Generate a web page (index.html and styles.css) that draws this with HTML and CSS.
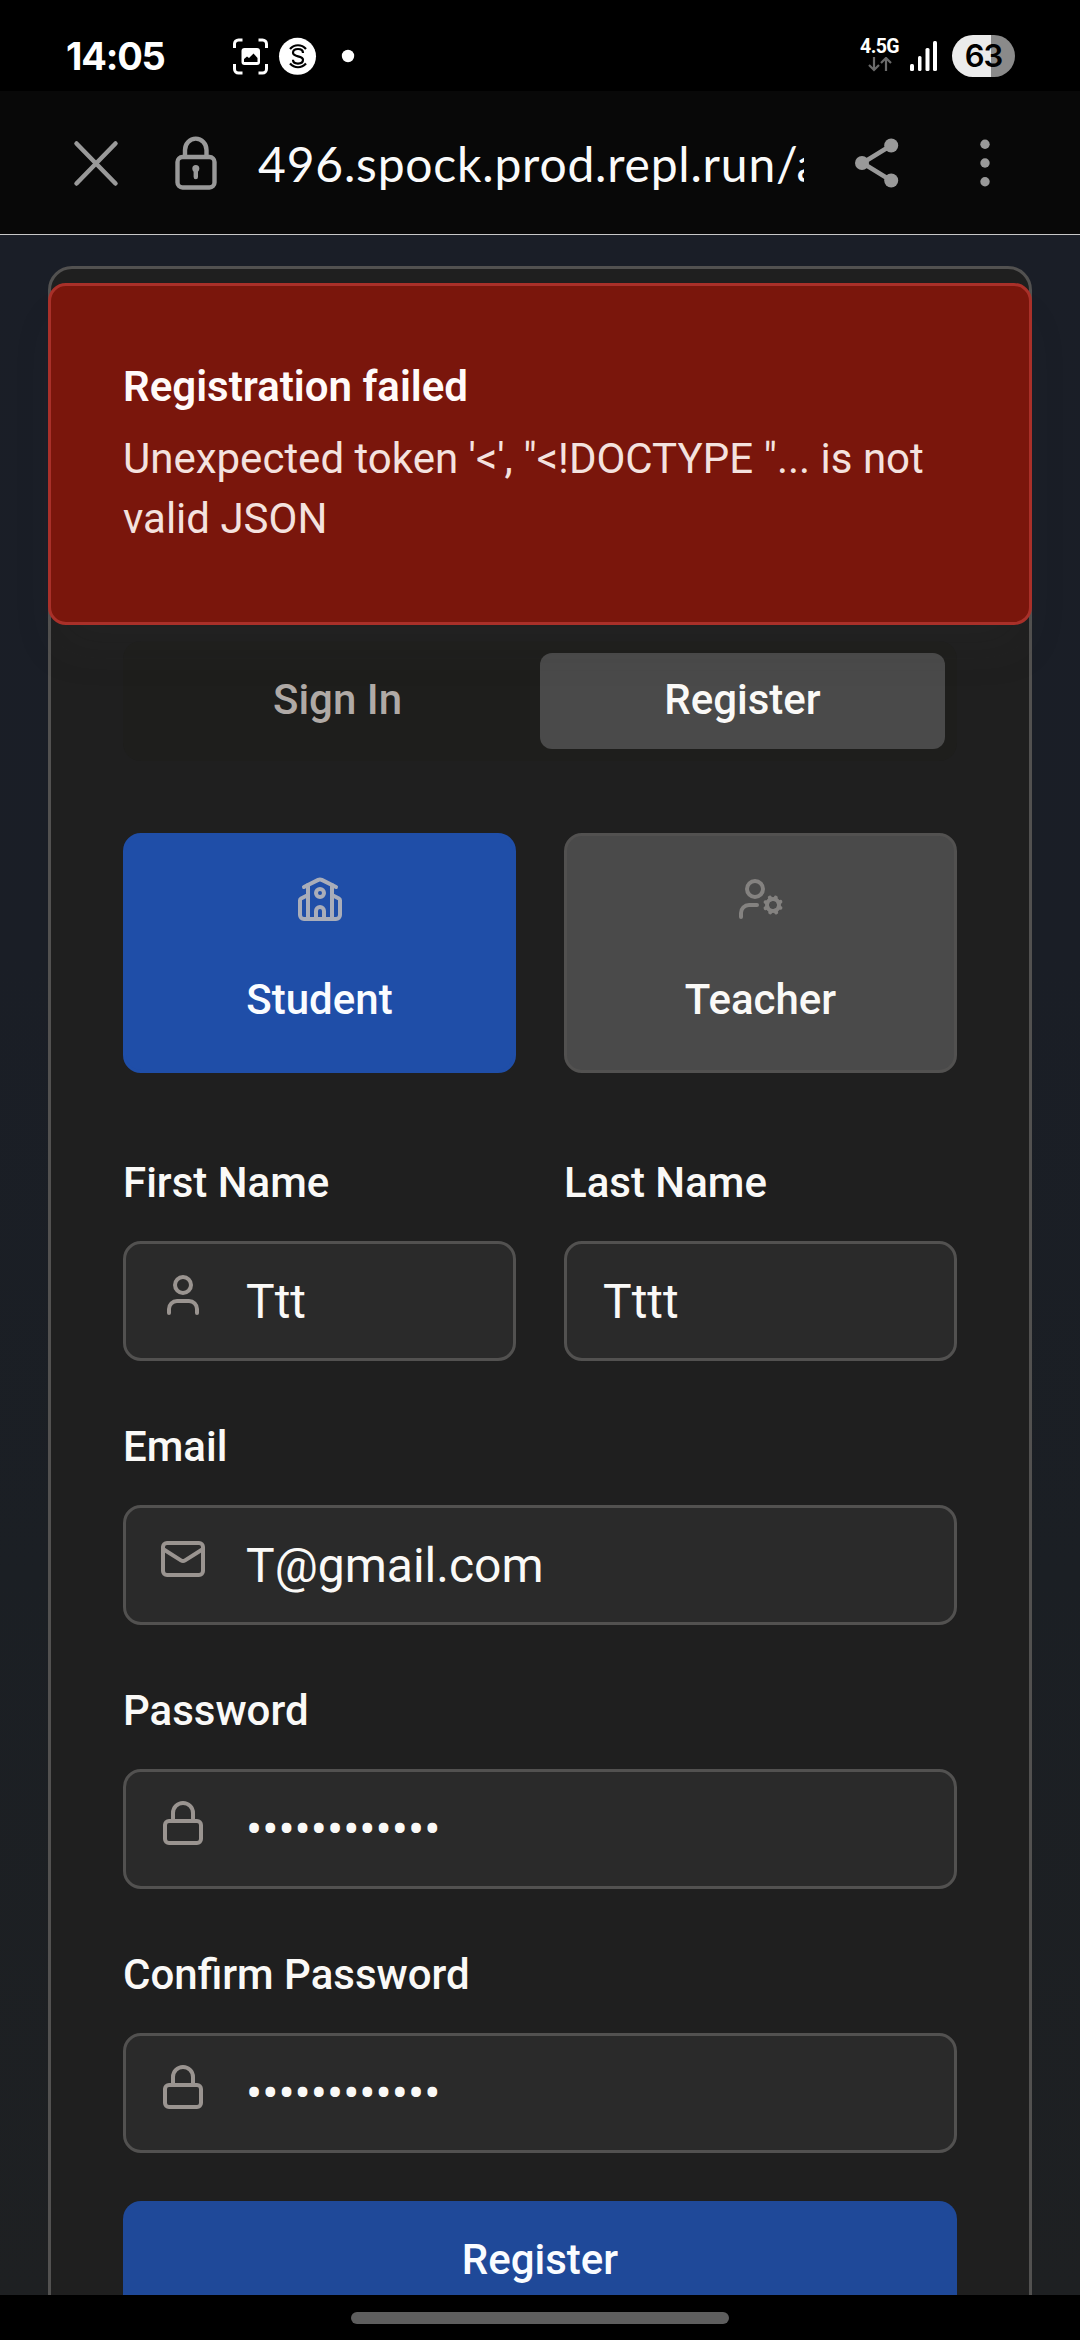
FILE: index.html
```html
<!DOCTYPE html>
<html lang="en">
<head>
<meta charset="utf-8">
<title>Register</title>
<link rel="stylesheet" href="styles.css">
</head>
<body>
<svg class="sprite" width="0" height="0">
  <symbol id="user" viewBox="0 0 24 24"><path d="M19 21v-2a4 4 0 0 0-4-4H9a4 4 0 0 0-4 4v2"/><circle cx="12" cy="7" r="4"/></symbol>
  <symbol id="mail" viewBox="0 0 24 24"><rect x="2" y="4" width="20" height="16" rx="2"/><path d="m22 7-8.97 5.7a1.94 1.94 0 0 1-2.06 0L2 7"/></symbol>
  <symbol id="lock" viewBox="0 0 24 24"><rect x="3" y="11" width="18" height="11" rx="2"/><path d="M7 11V7a5 5 0 0 1 10 0v4"/></symbol>
  <symbol id="school" viewBox="0 0 24 24"><path d="M14 22v-4a2 2 0 1 0-4 0v4"/><path d="m18 10 3.447 1.724a1 1 0 0 1 .553.894V20a2 2 0 0 1-2 2H4a2 2 0 0 1-2-2v-7.382a1 1 0 0 1 .553-.894L6 10"/><path d="M18 5v17"/><path d="m4 6 7.106-3.553a2 2 0 0 1 1.788 0L20 6"/><path d="M6 5v17"/><circle cx="12" cy="9" r="2"/></symbol>
  <symbol id="user-cog" viewBox="0 0 24 24"><circle cx="18" cy="15" r="3"/><circle cx="9" cy="7" r="4"/><path d="M10 15H6a4 4 0 0 0-4 4v2"/><path d="m21.7 16.4-.9-.3M15.2 13.9l-.9-.3M16.6 18.7l.3-.9M19.1 12.2l.3-.9M19.6 18.7l-.4-1M16.8 12.3l-.4-1M14.3 16.6l1-.4M20.7 13.8l1-.4"/></symbol>
</svg>

<header class="status">
  <span class="clock">14:05</span>
  <svg class="notices" width="126" height="40" viewBox="0 0 126 40" fill="none">
    <path d="M2.500 12V8a4 4 0 0 1 4-4h4M26.500 4h4a4 4 0 0 1 4 4v4M34.500 28v5a4 4 0 0 1-4 4h-4M10.500 37h-4a4 4 0 0 1-4-4v-5" stroke="#fff" stroke-width="3"/>
    <rect x="9.500" y="12" width="18.500" height="17" rx="3" fill="#fff"/>
    <path d="M12 26v-3l3-2.500 2 1.500 4.500-4.500 4 4.500v4z" fill="#000"/>
    <circle cx="65.500" cy="20.300" r="18.500" fill="#fff"/>
    <path d="M71 17c0-2.500-2-4-5-4s-5 1.500-5 3.800c0 4.700 10 2.400 10 7 0 2.300-2 3.800-5 3.800s-5-1.500-5-3.800M58 13c4.500-5 11.500-5 16 0M58 27.500c4.500 5 11.500 5 16 0" stroke="#000" stroke-width="2.200"/>
    <circle cx="116" cy="20" r="6.200" fill="#fff"/>
  </svg>
  <div class="network">
    <span>4.5G</span>
    <svg width="26" height="15" viewBox="0 0 26 15" fill="none" stroke="#6b6b6b" stroke-width="2.200"><path d="M7 0v13M2 8l5 5 5-5M19 14V1M14 6l5-5 5 5"/></svg>
  </div>
  <svg class="signal" width="28" height="30" viewBox="0 0 28 30" fill="#fff"><rect x="0" y="23" width="4" height="7" rx="1.500"/><rect x="8" y="15" width="3.500" height="15" rx="1.500"/><rect x="15.500" y="7" width="4" height="23" rx="1.500"/><rect x="23" y="0" width="4" height="30" rx="1.500"/></svg>
  <span class="battery">63</span>
</header>

<nav class="toolbar">
  <svg class="close" width="50" height="54" viewBox="0 0 50 54" fill="none" stroke="#999" stroke-width="4.500" stroke-linecap="round"><path d="M5.500 7.500l39 40M44.500 7.500l-39 40"/></svg>
  <svg class="secure" width="42" height="54" viewBox="0 0 42 54" fill="none" stroke="#999" stroke-width="4.400"><rect x="2.500" y="21" width="37" height="30.500" rx="5"/><path d="M10 21v-7a10.700 11.300 0 0 1 21.500 0v7"/><circle cx="20.800" cy="32.500" r="3.500" fill="#999" stroke="none"/><path d="M20.800 33v8" stroke-linecap="round"/></svg>
  <span class="url">496.spock.prod.repl.run/a</span>
  <svg class="share" width="44" height="52" viewBox="0 0 44 52" fill="#999"><path d="M36 8.500L7.500 26 36 43.500" fill="none" stroke="#999" stroke-width="4.500"/><circle cx="7" cy="26" r="7"/><circle cx="36.200" cy="8.500" r="7"/><circle cx="36.200" cy="43.500" r="7"/></svg>
  <svg class="more" width="10" height="50" viewBox="0 0 10 50" fill="#999"><circle cx="5" cy="6.300" r="4.700"/><circle cx="5" cy="25" r="4.700"/><circle cx="5" cy="43.700" r="4.700"/></svg>
</nav>

<main class="page">
  <section class="card">
    <div class="tabs">
      <span class="tab">Sign In</span>
      <span class="tab active">Register</span>
    </div>
    <div class="pair roles">
      <div class="role selected"><svg class="icon"><use href="#school"/></svg><span>Student</span></div>
      <div class="role"><svg class="icon"><use href="#user-cog"/></svg><span>Teacher</span></div>
    </div>
    <div class="form">
      <div class="pair">
        <div class="field"><span class="label">First Name</span><div class="input"><svg class="icon"><use href="#user"/></svg><span>Ttt</span></div></div>
        <div class="field"><span class="label">Last Name</span><div class="input"><span>Tttt</span></div></div>
      </div>
      <div class="field"><span class="label">Email</span><div class="input"><svg class="icon"><use href="#mail"/></svg><span>T@gmail.com</span></div></div>
      <div class="field"><span class="label">Password</span><div class="input"><svg class="icon"><use href="#lock"/></svg><span>••••••••••••</span></div></div>
      <div class="field"><span class="label">Confirm Password</span><div class="input"><svg class="icon"><use href="#lock"/></svg><span>••••••••••••</span></div></div>
    </div>
    <div class="submit">Register</div>
  </section>
  <div class="toast">
    <strong>Registration failed</strong>
    <p>Unexpected token '&lt;', "&lt;!DOCTYPE "... is not valid JSON</p>
  </div>
</main>

<footer class="gesture"><span></span></footer>
</body>
</html>
```
FILE: styles.css
```css
* { box-sizing: border-box; }

body {
  margin: 0;
  width: 1080px;
  height: 2340px;
  overflow: hidden;
  display: flex;
  flex-direction: column;
  background: #000;
  color: #faf9f7;
  font-family: Roboto, sans-serif;
  font-size: 42px;
  line-height: 60px;
}

svg { display: block; flex: none; }
.sprite { position: absolute; }

.status {
  flex: none;
  height: 91px;
  padding: 21px 65px 0 66px;
  display: flex;
  align-items: center;
  font-family: Inter, sans-serif;
  font-weight: 700;
}
.clock { width: 166px; font-size: 38px; letter-spacing: -1.2px; color: #fff; }
.network {
  margin-left: auto;
  display: flex;
  flex-direction: column;
  align-items: center;
  gap: 3px;
  font-family: Roboto, sans-serif;
  font-size: 19.5px;
  line-height: 14px;
  letter-spacing: -0.6px;
  color: #fff;
}
.signal { margin: 0 14px 0 11px; }
.battery {
  width: 63px;
  height: 42px;
  border-radius: 21px;
  background: linear-gradient(90deg, #ebebeb 39px, #8a8a8a 39px);
  color: #000;
  font-size: 31px;
  font-weight: 600;
  line-height: 41px;
  letter-spacing: -1px;
  text-align: center;
}

.toolbar {
  flex: none;
  height: 144px;
  padding-left: 71px;
  display: flex;
  align-items: center;
  background: #080808;
  border-bottom: 1px solid #c8c8c8;
}
.secure { margin-left: 54px; }
.url {
  width: 546px;
  margin-left: 41px;
  padding-top: 2px;
  overflow: hidden;
  white-space: nowrap;
  font-family: Lato, sans-serif;
  font-size: 48px;
  letter-spacing: 0.8px;
  color: #fafafa;
}
.share { margin-left: 51px; }
.more { margin-left: 81px; }

.page {
  position: relative;
  flex: 1;
  min-height: 0;
  overflow: hidden;
  padding: 31px 48px 0;
  background: linear-gradient(#1a1e27, #1a1e26 35%, #1b1f24 65%, #1e2022);
}

.card {
  height: 2200px;
  padding: 372px 72px 0;
  border: 3px solid #525150;
  border-radius: 24px;
  background: #1f1f1f;
}

.tabs {
  display: flex;
  height: 120px;
  padding: 12px;
  border-radius: 18px;
  background: #1e1e1c;
  font-weight: 500;
}
.tab {
  flex: 1;
  display: flex;
  align-items: center;
  justify-content: center;
  padding-bottom: 2px;
  border-radius: 12px;
  color: #b0aaa6;
}
.tab.active { background: #4a4a4a; color: #faf9f7; }

.pair { display: grid; grid-template-columns: 1fr 1fr; gap: 48px; }
.roles { margin-top: 72px; }
.role {
  height: 240px;
  padding-top: 39px;
  display: flex;
  flex-direction: column;
  align-items: center;
  gap: 47px;
  border: 3px solid #525150;
  border-radius: 18px;
  background: #4a4a4a;
  color: #faf9f7;
  font-weight: 500;
}
.role .icon { color: #848280; }
.role.selected { background: #1f4ea8; border-color: #1f4ea8; color: #fafcff; }
.role.selected .icon { color: #a9adb9; }

.icon {
  width: 48px;
  height: 48px;
  fill: none;
  stroke: currentColor;
  stroke-width: 2;
  stroke-linecap: round;
  stroke-linejoin: round;
}

.form { margin-top: 80px; display: flex; flex-direction: column; gap: 56px; }
.field { display: flex; flex-direction: column; gap: 28px; }
.label { font-weight: 500; }
.input {
  height: 120px;
  padding: 2px 36px 0;
  display: flex;
  align-items: center;
  gap: 39px;
  border: 3px solid #525150;
  border-radius: 18px;
  background: #2a2a2a;
  font-size: 48px;
}
.input .icon { margin: -14px 0 0 -3px; color: #9a9490; }

.submit {
  margin-top: 48px;
  height: 120px;
  line-height: 118px;
  border-radius: 18px;
  background: #1f4999;
  color: #fafcff;
  font-weight: 500;
  text-align: center;
}

/* Notification laid over the top of the card */
.toast {
  position: absolute;
  top: 48px;
  left: 48px;
  right: 48px;
  padding: 71px 72px 73px;
  display: flex;
  flex-direction: column;
  gap: 12px;
  border: 3px solid #a93029;
  border-radius: 18px;
  background: #7a160c;
  box-shadow: 0 30px 45px -9px rgba(60, 60, 55, 0.12);
  color: #f4e2df;
}
.toast strong { font-weight: 600; color: #fffaf9; }
.toast p { margin: 0; }

.gesture {
  flex: none;
  height: 45px;
  padding-top: 17px;
  display: flex;
  justify-content: center;
}
.gesture span { width: 378px; height: 12px; border-radius: 6px; background: #5e5e5e; }
```
